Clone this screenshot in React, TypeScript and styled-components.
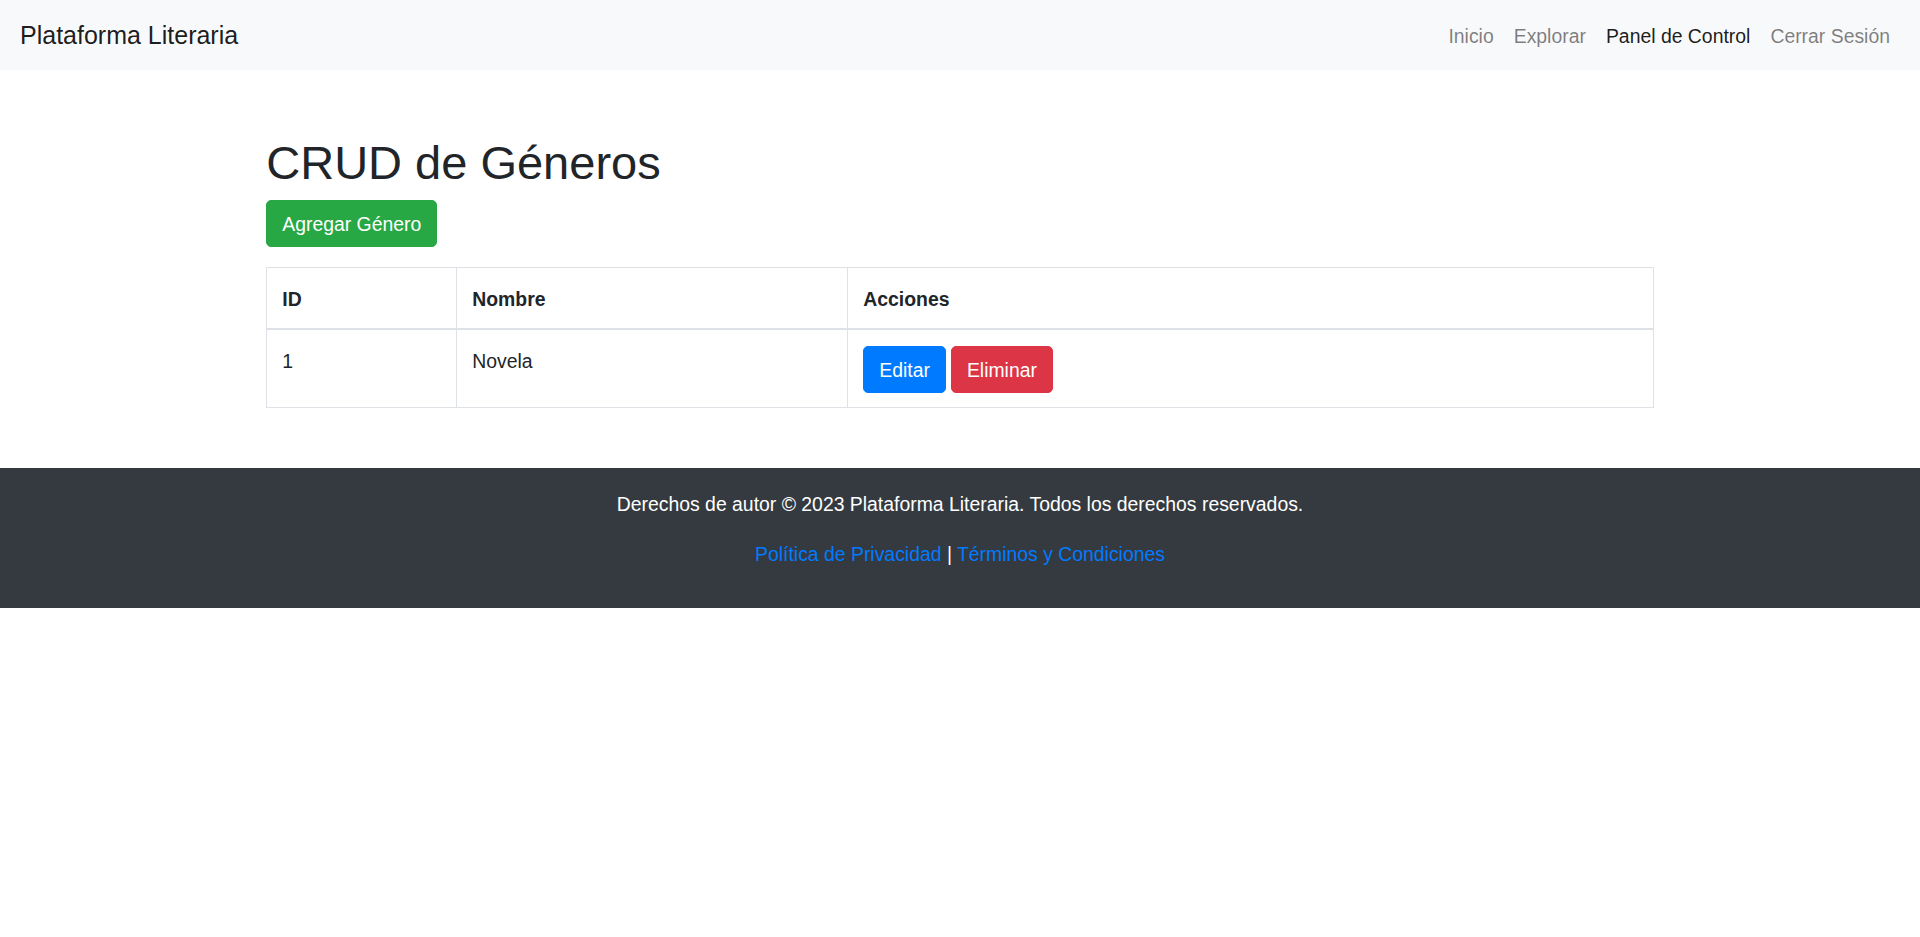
import styled, { createGlobalStyle } from 'styled-components';

const GlobalStyle = createGlobalStyle`
    * {
        box-sizing: border-box;
    }
    body {
        margin: 0;
        font-family: "Liberation Sans", Arial, sans-serif;
        font-size: 19.4px;
        line-height: 30px;
        color: #212529;
        background-color: #fff;
    }
`;

const Navbar = styled.nav`
    display: flex;
    justify-content: space-between;
    align-items: center;
    padding: 10px 20px;
    background-color: #f8f9fa;
`;

const Brand = styled.a`
    font-size: 25px;
    line-height: 37.5px;
    padding: 7px 0 5.5px;
    color: rgba(0, 0, 0, 0.9);
    text-decoration: none;
`;

const NavList = styled.ul`
    display: flex;
    list-style: none;
    margin: 0;
    padding: 0;
`;

const NavLink = styled.a<{ $active?: boolean }>`
    display: block;
    padding: 11px 10px 9px;
    color: ${(p) => (p.$active ? 'rgba(0, 0, 0, 0.9)' : 'rgba(0, 0, 0, 0.5)')};
    text-decoration: none;
`;

const Container = styled.main`
    max-width: 1425px;
    margin: 60px auto 0;
    padding: 0 18.75px;
`;

const Title = styled.h1`
    font-size: 47px;
    font-weight: 500;
    line-height: 60px;
    padding-top: 3px;
    margin: 0 0 7px;
`;

const Button = styled.button<{ $color: string }>`
    display: inline-block;
    font-family: inherit;
    font-size: 19.4px;
    line-height: 30px;
    padding: 7.5px 15px;
    color: #fff;
    background-color: ${(p) => p.$color};
    border: 1px solid ${(p) => p.$color};
    border-radius: 5px;
    cursor: pointer;
`;

const Actions = styled.div`
    display: flex;
    gap: 5px;
`;

const Table = styled.table`
    width: 100%;
    margin: 20px 0 0;
    border-collapse: collapse;
    border: 1px solid #dee2e6;
`;

const Th = styled.th<{ $width?: string }>`
    width: ${(p) => p.$width || 'auto'};
    padding: 16px 15px 14px;
    text-align: left;
    vertical-align: bottom;
    font-weight: bold;
    border: 1px solid #dee2e6;
    border-bottom: 2.5px solid #dee2e6;
`;

const Td = styled.td`
    padding: 16px 15px 14px;
    vertical-align: top;
    border: 1px solid #dee2e6;
`;

const Footer = styled.footer`
    margin-top: 60px;
    padding: 21px 0 19px;
    background-color: #343a40;
    color: #fff;
    text-align: center;

    p {
        margin: 0 0 20px;
    }
    a {
        color: #007bff;
        text-decoration: none;
    }
`;

function App() {
    return (
        <>
            <GlobalStyle />
            <Navbar>
                <Brand href="#">Plataforma Literaria</Brand>
                <NavList>
                    <li><NavLink href="#">Inicio</NavLink></li>
                    <li><NavLink href="#">Explorar</NavLink></li>
                    <li><NavLink href="#" $active>Panel de Control</NavLink></li>
                    <li><NavLink href="#">Cerrar Sesión</NavLink></li>
                </NavList>
            </Navbar>
            <Container>
                <Title>CRUD de Géneros</Title>
                <Button $color="#28a745">Agregar Género</Button>
                <Table>
                    <thead>
                        <tr>
                            <Th $width="190px">ID</Th>
                            <Th $width="391px">Nombre</Th>
                            <Th>Acciones</Th>
                        </tr>
                    </thead>
                    <tbody>
                        <tr>
                            <Td>1</Td>
                            <Td>Novela</Td>
                            <Td>
                                <Actions>
                                    <Button $color="#007bff">Editar</Button>
                                    <Button $color="#dc3545">Eliminar</Button>
                                </Actions>
                            </Td>
                        </tr>
                    </tbody>
                </Table>
            </Container>
            <Footer>
                <p>Derechos de autor © 2023 Plataforma Literaria. Todos los derechos reservados.</p>
                <p>
                    <a href="#">Política de Privacidad</a> | <a href="#">Términos y Condiciones</a>
                </p>
            </Footer>
        </>
    );
}

export default App;
